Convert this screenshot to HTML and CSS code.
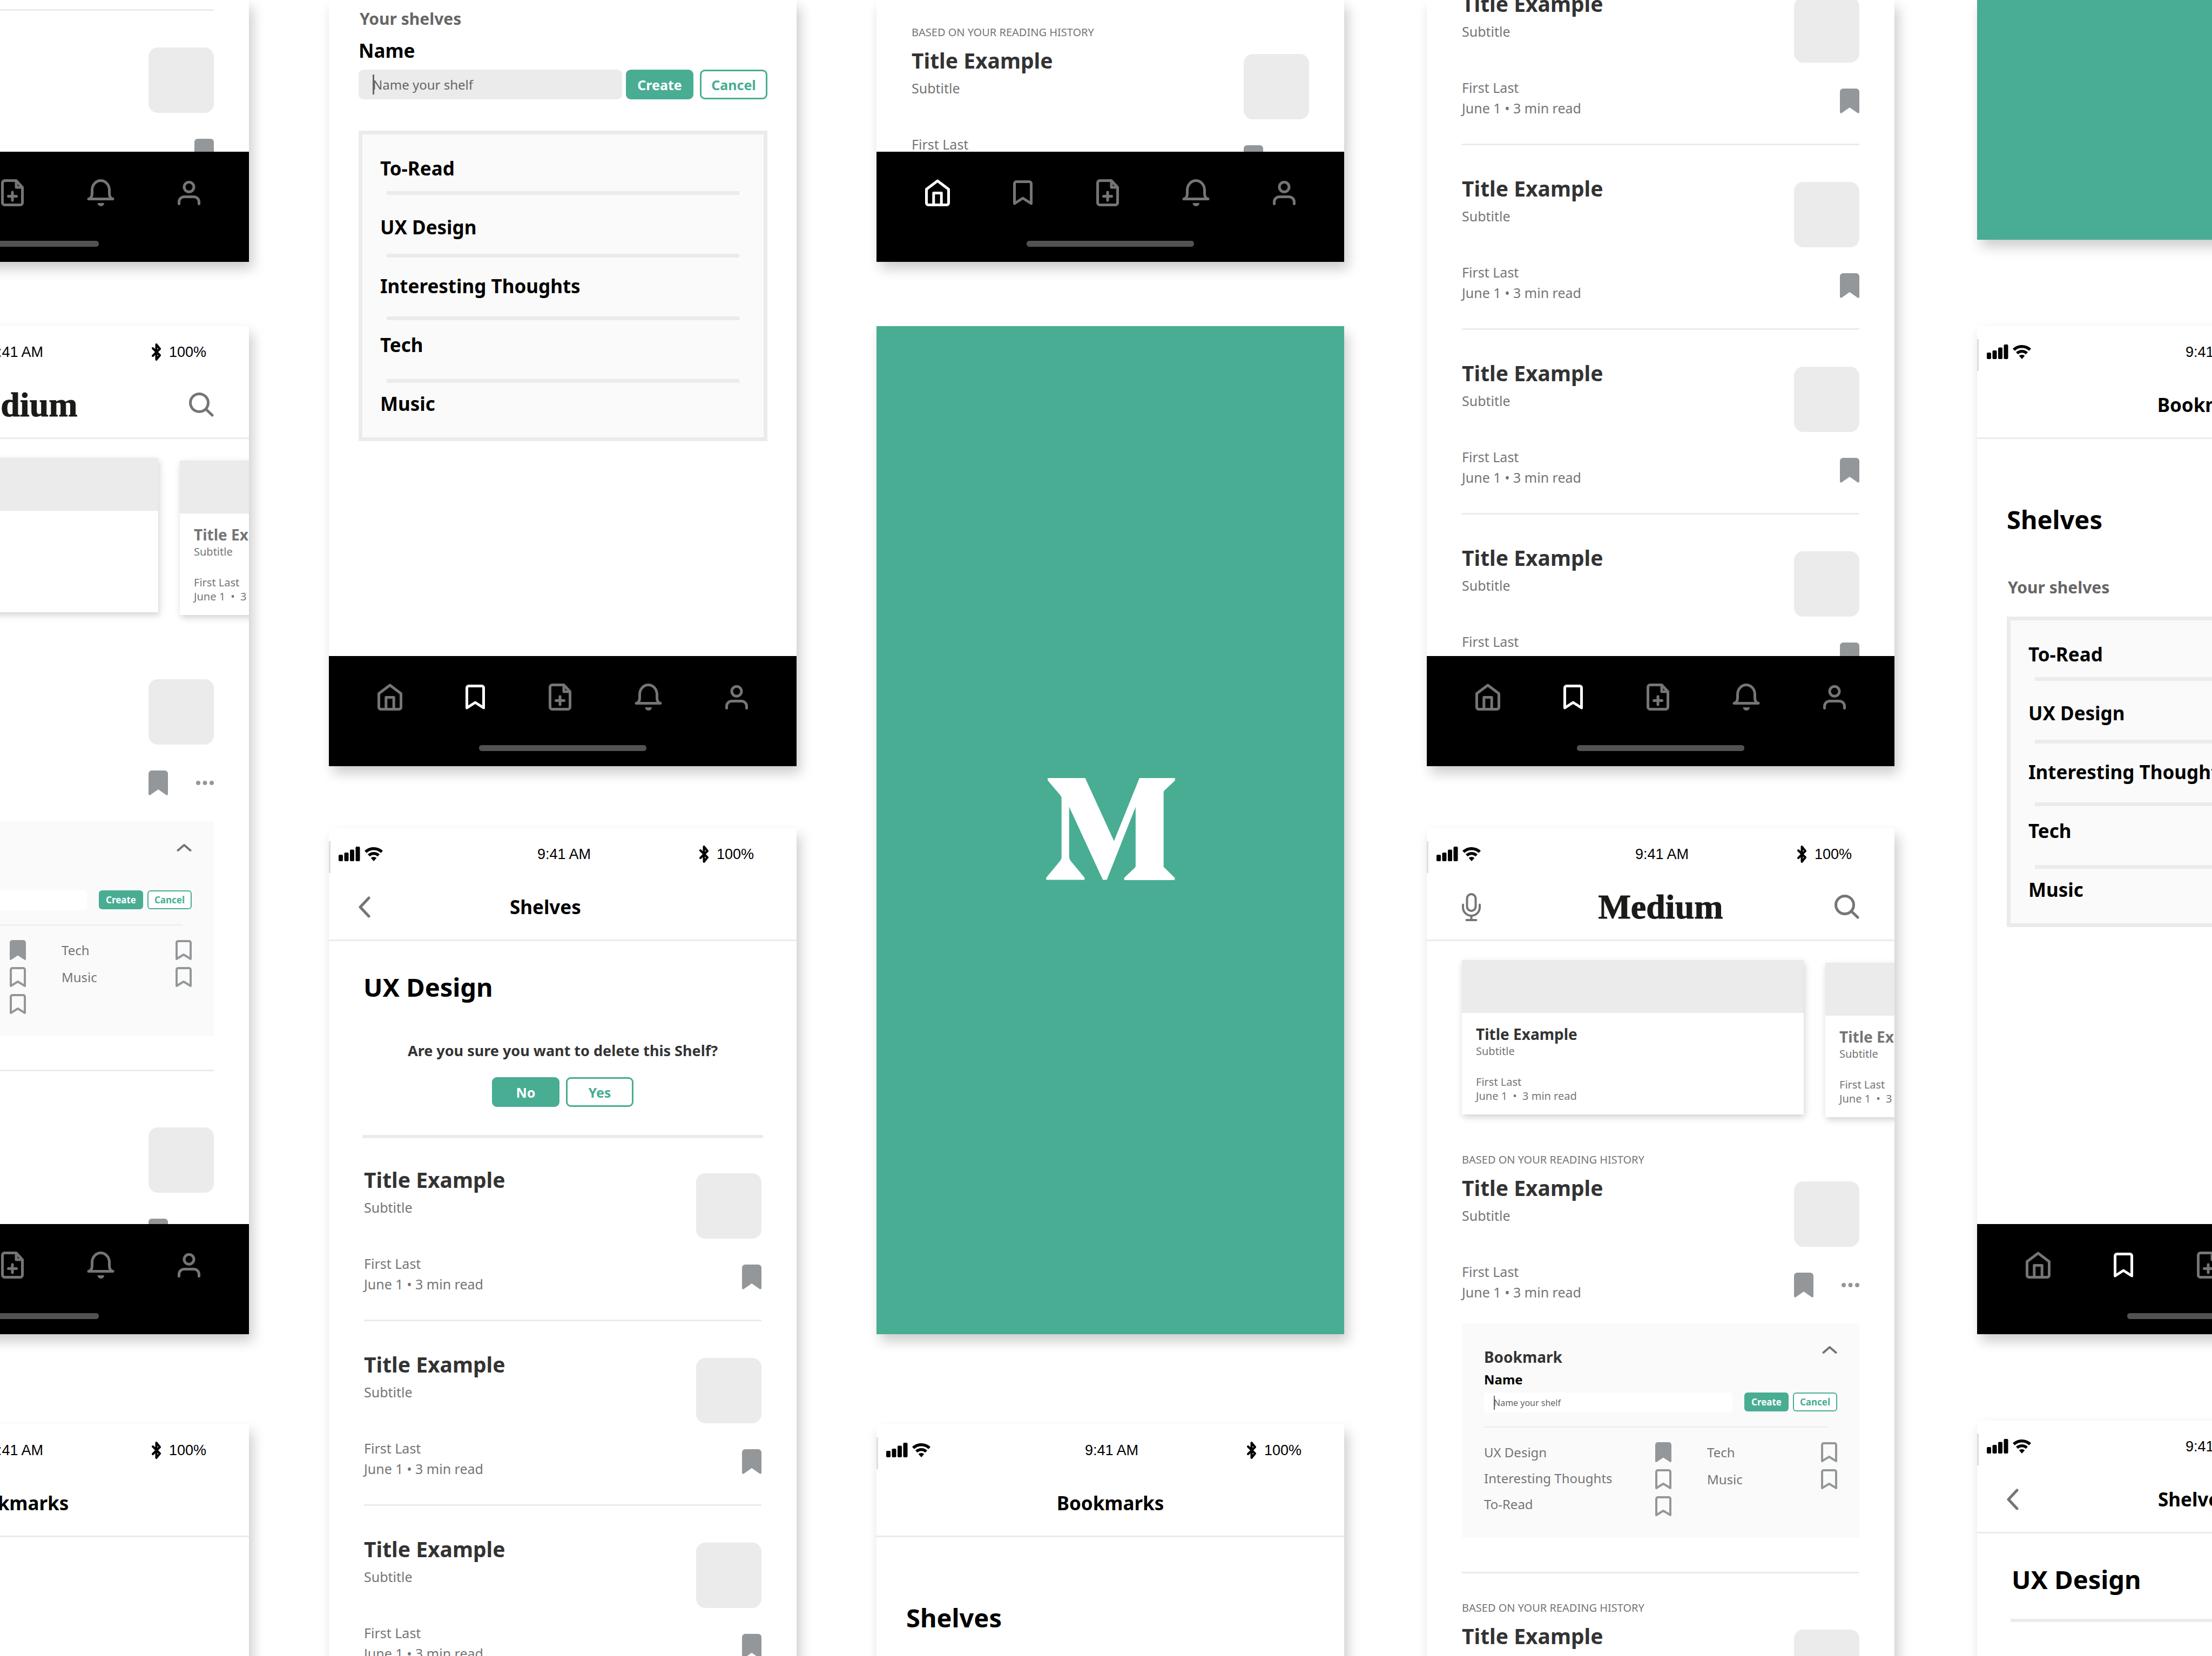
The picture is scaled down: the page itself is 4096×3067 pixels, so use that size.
FILE: index.html
```html
<!DOCTYPE html>
<html lang="en">
<head>
<meta charset="utf-8">
<title>Medium shelves – screens</title>
<link rel="stylesheet" href="styles.css">
</head>
<body>
<svg class="sprite" aria-hidden="true">
  <symbol id="i-home" viewBox="0 0 46 50"><path class="line" d="M2.5 18.5 23 3l20.500 15.500V44a3.500 3.500 0 0 1-3.500 3.500H6A3.500 3.500 0 0 1 2.500 44ZM15.800 47V25.500h14.400V47"/></symbol>
  <symbol id="i-mark" viewBox="0 0 36 46"><path class="line" d="M2.500 6A3.500 3.500 0 0 1 6 2.500h24A3.500 3.500 0 0 1 33.500 6v37L18 33 2.500 43Z"/></symbol>
  <symbol id="i-file" viewBox="0 0 42 50"><path class="line" d="M28 2.500H6.500a4 4 0 0 0-4 4v37a4 4 0 0 0 4 4h29a4 4 0 0 0 4-4V15ZM28 2.500V15h11.500M21 24v15M13.500 31.500h15"/></symbol>
  <symbol id="i-bell" viewBox="0 0 51 50"><path class="line" d="M9.500 26v-6a16 17.500 0 0 1 32 0v6c0 6 1.500 9.500 6.500 10.500H3C8 35.500 9.500 32 9.500 26Z"/><path d="M19.500 44h12.500c0 3-3 6-6.200 6s-6.300-3-6.300-6z"/></symbol>
  <symbol id="i-user" viewBox="0 0 42 45"><circle class="line" cx="21" cy="11.300" r="9"/><path class="line" d="M2.500 42.500V39a9.500 9.500 0 0 1 9.500-9.500h18a9.500 9.500 0 0 1 9.500 9.500v3.500"/></symbol>
  <symbol id="i-mark-full" viewBox="0 0 36 46"><path d="M0 6a6 6 0 0 1 6-6h24a6 6 0 0 1 6 6v37.500c0 1.700-1.500 2.800-3 2L18 35 3 45.500c-1.500.800-3-.300-3-2Z"/></symbol>
  <symbol id="i-mark-sm" viewBox="0 0 30 37"><path class="line thin" d="M2 5a3 3 0 0 1 3-3h20a3 3 0 0 1 3 3v30l-13-8-13 8Z"/></symbol>
  <symbol id="i-mark-sm-full" viewBox="0 0 30 37"><path d="M0 5a5 5 0 0 1 5-5h20a5 5 0 0 1 5 5v30c0 1.500-1.300 2.300-2.500 1.700L15 28.500 2.500 36.700C1.300 37.300 0 36.500 0 35Z"/></symbol>
  <symbol id="i-dots" viewBox="0 0 33 8"><circle cx="4" cy="4" r="4"/><circle cx="16.500" cy="4" r="4"/><circle cx="29" cy="4" r="4"/></symbol>
  <symbol id="i-mic" viewBox="0 0 35 52"><path class="line thin" d="M9.500 10a8 8 0 0 1 16 0v15a8 8 0 0 1-16 0ZM2 21.500v5a15.500 15.500 0 0 0 31 0v-5M17.500 42v8M8.500 50h18"/></symbol>
  <symbol id="i-search" viewBox="0 0 46 45"><circle class="line" cx="19" cy="19" r="16.500"/><path class="line" d="m31.500 31 11.500 11"/></symbol>
  <symbol id="i-back" viewBox="0 0 22 40"><path class="line" d="M19 3 3 20l16 17"/></symbol>
  <symbol id="i-up" viewBox="0 0 28 16"><path class="line thin" d="M2.500 13 14 3l11.500 10"/></symbol>
  <symbol id="i-signal" viewBox="0 0 40 27"><rect y="15" width="8" height="12" rx="2"/><rect x="10.500" y="11" width="8" height="16" rx="2"/><rect x="21" y="5.500" width="8" height="21.500" rx="2"/><rect x="31.500" width="8" height="27" rx="2"/></symbol>
  <symbol id="i-wifi" viewBox="0 0 34 26"><path d="M17 0C10.500 0 4.500 2.500 0 6.800l3.800 4a19 19 0 0 1 26.400 0l3.800-4A24.500 24.500 0 0 0 17 0Z"/><path d="M17 9c-4.200 0-8 1.600-11 4.300l3.700 3.900a10.700 10.700 0 0 1 14.600 0l3.700-3.900A16 16 0 0 0 17 9Z"/><path d="M17 18c-2.100 0-4 .800-5.300 2L17 26l5.300-6A8 8 0 0 0 17 18Z"/></symbol>
  <symbol id="i-bluetooth" viewBox="0 0 18 34"><path class="line thin" d="m2 10 13 13-6.500 8V3L15 11 2 24"/></symbol>
</svg>

<main class="wall">

  <div class="column">
    <section class="phone phone--strip">
      <div class="screen screen--tail">
        <article class="article article--ruled">
          <div class="article-text">
            <h3 class="article-title">Title Example</h3>
            <p class="article-sub">Subtitle</p>
            <p class="meta">First Last</p>
            <p class="meta">June 1 • 3 min read</p>
          </div>
          <div class="article-side">
            <div class="thumb"></div>
            <button class="icon-btn" aria-label="Bookmark"><svg class="mark"><use href="#i-mark-full"/></svg></button>
          </div>
        </article>
      </div>
      <nav class="nav">
        <div class="nav-row">
          <button class="icon-btn" aria-label="Home"><svg class="n-home"><use href="#i-home"/></svg></button>
          <button class="icon-btn" aria-label="Bookmarks"><svg class="mark"><use href="#i-mark"/></svg></button>
          <button class="icon-btn" aria-label="New story"><svg class="n-file"><use href="#i-file"/></svg></button>
          <button class="icon-btn" aria-label="Notifications"><svg class="n-bell"><use href="#i-bell"/></svg></button>
          <button class="icon-btn" aria-label="Profile"><svg class="n-user"><use href="#i-user"/></svg></button>
        </div>
        <div class="home-bar"></div>
      </nav>
    </section>

    <section class="phone phone--full gap-md">
      <header class="head">
        <div class="status">
          <span class="status-left"><svg class="s-signal"><use href="#i-signal"/></svg><svg class="s-wifi"><use href="#i-wifi"/></svg></span>
          <span>9:41 AM</span>
          <span class="status-right"><svg class="s-bt"><use href="#i-bluetooth"/></svg>100%</span>
        </div>
        <div class="bar">
          <button class="icon-btn" aria-label="Voice"><svg class="h-mic"><use href="#i-mic"/></svg></button>
          <h1 class="brand">Medium</h1>
          <button class="icon-btn bar-end" aria-label="Search"><svg class="h-search"><use href="#i-search"/></svg></button>
        </div>
      </header>
      <div class="screen">
        <div class="carousel">
          <div class="card">
            <div class="card-art"></div>
            <h3 class="card-title">Title Example</h3>
            <p class="card-text">Subtitle</p>
            <p class="card-text card-author">First Last</p>
            <p class="card-text">June 1 <span class="dot">•</span> 3 min read</p>
          </div>
          <div class="card card--next">
            <div class="card-art"></div>
            <h3 class="card-title">Title Example</h3>
            <p class="card-text">Subtitle</p>
            <p class="card-text card-author">First Last</p>
            <p class="card-text">June 1 <span class="dot">•</span> 3 min read</p>
          </div>
        </div>
        <p class="overline">BASED ON YOUR READING HISTORY</p>
        <article class="article article--home">
          <div class="article-text">
            <h3 class="article-title">Title Example</h3>
            <p class="article-sub">Subtitle</p>
            <p class="meta">First Last</p>
            <p class="meta">June 1 • 3 min read</p>
          </div>
          <div class="article-side">
            <div class="thumb"></div>
            <div class="actions">
              <button class="icon-btn" aria-label="Bookmark"><svg class="mark"><use href="#i-mark-full"/></svg></button>
              <button class="icon-btn" aria-label="More"><svg class="dots"><use href="#i-dots"/></svg></button>
            </div>
          </div>
        </article>
        <div class="panel">
          <div class="panel-head">
            <h4 class="panel-title">Bookmark</h4>
            <button class="icon-btn" aria-label="Collapse"><svg class="p-up"><use href="#i-up"/></svg></button>
          </div>
          <label class="panel-label" for="panel-name-1">Name</label>
          <div class="panel-form">
            <input class="field field--sm" id="panel-name-1" type="text" placeholder="Name your shelf">
            <button class="btn btn--sm">Create</button>
            <button class="btn btn--sm btn--ghost">Cancel</button>
          </div>
          <div class="panel-lists">
            <div class="pick">
              <ul class="pick-names"><li>UX Design</li><li>Interesting Thoughts</li><li>To-Read</li></ul>
              <div class="pick-marks">
                <button class="icon-btn" aria-label="UX Design" aria-pressed="true"><svg class="mark-sm"><use href="#i-mark-sm-full"/></svg></button>
                <button class="icon-btn" aria-label="Interesting Thoughts"><svg class="mark-sm"><use href="#i-mark-sm"/></svg></button>
                <button class="icon-btn" aria-label="To-Read"><svg class="mark-sm"><use href="#i-mark-sm"/></svg></button>
              </div>
            </div>
            <div class="pick pick--loose">
              <ul class="pick-names"><li>Tech</li><li>Music</li></ul>
              <div class="pick-marks">
                <button class="icon-btn" aria-label="Tech"><svg class="mark-sm"><use href="#i-mark-sm"/></svg></button>
                <button class="icon-btn" aria-label="Music"><svg class="mark-sm"><use href="#i-mark-sm"/></svg></button>
              </div>
            </div>
          </div>
        </div>
        <hr class="rule">
        <p class="overline">BASED ON YOUR READING HISTORY</p>
        <article class="article article--home">
          <div class="article-text">
            <h3 class="article-title">Title Example</h3>
            <p class="article-sub">Subtitle</p>
            <p class="meta">First Last</p>
          </div>
          <div class="article-side">
            <div class="thumb"></div>
            <div class="actions">
              <button class="icon-btn" aria-label="Bookmark"><svg class="mark"><use href="#i-mark-full"/></svg></button>
              <button class="icon-btn" aria-label="More"><svg class="dots"><use href="#i-dots"/></svg></button>
            </div>
          </div>
        </article>
      </div>
      <nav class="nav">
        <div class="nav-row">
          <button class="icon-btn active" aria-label="Home"><svg class="n-home"><use href="#i-home"/></svg></button>
          <button class="icon-btn" aria-label="Bookmarks"><svg class="mark"><use href="#i-mark"/></svg></button>
          <button class="icon-btn" aria-label="New story"><svg class="n-file"><use href="#i-file"/></svg></button>
          <button class="icon-btn" aria-label="Notifications"><svg class="n-bell"><use href="#i-bell"/></svg></button>
          <button class="icon-btn" aria-label="Profile"><svg class="n-user"><use href="#i-user"/></svg></button>
        </div>
        <div class="home-bar"></div>
      </nav>
    </section>

    <section class="phone phone--full gap-xl">
      <header class="head">
        <div class="status">
          <span class="status-left"><svg class="s-signal"><use href="#i-signal"/></svg><svg class="s-wifi"><use href="#i-wifi"/></svg></span>
          <span>9:41 AM</span>
          <span class="status-right"><svg class="s-bt"><use href="#i-bluetooth"/></svg>100%</span>
        </div>
        <div class="bar bar--page"><span></span><h1 class="bar-title">Bookmarks</h1></div>
      </header>
      <div class="screen shelves"><h2 class="page-title">Shelves</h2></div>
    </section>
  </div>

  <div class="column">
    <section class="phone phone--cut">
      <div class="screen shelves shelves--tail">
        <p class="section-label">Your shelves</p>
        <label class="form-label" for="shelf-name">Name</label>
        <div class="form">
          <input class="field" id="shelf-name" type="text" placeholder="Name your shelf">
          <button class="btn">Create</button>
          <button class="btn btn--ghost">Cancel</button>
        </div>
        <ul class="shelf-box"><li>To-Read</li><li>UX Design</li><li>Interesting Thoughts</li><li>Tech</li><li>Music</li></ul>
      </div>
      <nav class="nav">
        <div class="nav-row">
          <button class="icon-btn" aria-label="Home"><svg class="n-home"><use href="#i-home"/></svg></button>
          <button class="icon-btn active" aria-label="Bookmarks"><svg class="mark"><use href="#i-mark"/></svg></button>
          <button class="icon-btn" aria-label="New story"><svg class="n-file"><use href="#i-file"/></svg></button>
          <button class="icon-btn" aria-label="Notifications"><svg class="n-bell"><use href="#i-bell"/></svg></button>
          <button class="icon-btn" aria-label="Profile"><svg class="n-user"><use href="#i-user"/></svg></button>
        </div>
        <div class="home-bar"></div>
      </nav>
    </section>

    <section class="phone phone--full gap-sm">
      <header class="head">
        <div class="status">
          <span class="status-left"><svg class="s-signal"><use href="#i-signal"/></svg><svg class="s-wifi"><use href="#i-wifi"/></svg></span>
          <span>9:41 AM</span>
          <span class="status-right"><svg class="s-bt"><use href="#i-bluetooth"/></svg>100%</span>
        </div>
        <div class="bar bar--page">
          <button class="icon-btn" aria-label="Back"><svg class="h-back"><use href="#i-back"/></svg></button>
          <h1 class="bar-title">Shelves</h1>
        </div>
      </header>
      <div class="screen shelf">
        <h2 class="page-title">UX Design</h2>
        <p class="question">Are you sure you want to delete this Shelf?</p>
        <div class="choices">
          <button class="btn">No</button>
          <button class="btn btn--ghost">Yes</button>
        </div>
        <hr class="thick-rule">
        <article class="article article--first">
          <div class="article-text">
            <h3 class="article-title">Title Example</h3>
            <p class="article-sub">Subtitle</p>
            <p class="meta">First Last</p>
            <p class="meta">June 1 • 3 min read</p>
          </div>
          <div class="article-side">
            <div class="thumb"></div>
            <button class="icon-btn" aria-label="Bookmark"><svg class="mark"><use href="#i-mark-full"/></svg></button>
          </div>
        </article>
        <article class="article article--ruled">
          <div class="article-text">
            <h3 class="article-title">Title Example</h3>
            <p class="article-sub">Subtitle</p>
            <p class="meta">First Last</p>
            <p class="meta">June 1 • 3 min read</p>
          </div>
          <div class="article-side">
            <div class="thumb"></div>
            <button class="icon-btn" aria-label="Bookmark"><svg class="mark"><use href="#i-mark-full"/></svg></button>
          </div>
        </article>
        <article class="article article--ruled">
          <div class="article-text">
            <h3 class="article-title">Title Example</h3>
            <p class="article-sub">Subtitle</p>
            <p class="meta">First Last</p>
            <p class="meta">June 1 • 3 min read</p>
          </div>
          <div class="article-side">
            <div class="thumb"></div>
            <button class="icon-btn" aria-label="Bookmark"><svg class="mark"><use href="#i-mark-full"/></svg></button>
          </div>
        </article>
      </div>
    </section>
  </div>

  <div class="column">
    <section class="phone phone--strip">
      <div class="screen screen--tail-home">
        <p class="overline">BASED ON YOUR READING HISTORY</p>
        <article class="article article--home">
          <div class="article-text">
            <h3 class="article-title">Title Example</h3>
            <p class="article-sub">Subtitle</p>
            <p class="meta">First Last</p>
            <p class="meta">June 1 • 3 min read</p>
          </div>
          <div class="article-side">
            <div class="thumb"></div>
            <div class="actions">
              <button class="icon-btn" aria-label="Bookmark"><svg class="mark"><use href="#i-mark-full"/></svg></button>
              <button class="icon-btn" aria-label="More"><svg class="dots"><use href="#i-dots"/></svg></button>
            </div>
          </div>
        </article>
      </div>
      <nav class="nav">
        <div class="nav-row">
          <button class="icon-btn active" aria-label="Home"><svg class="n-home"><use href="#i-home"/></svg></button>
          <button class="icon-btn" aria-label="Bookmarks"><svg class="mark"><use href="#i-mark"/></svg></button>
          <button class="icon-btn" aria-label="New story"><svg class="n-file"><use href="#i-file"/></svg></button>
          <button class="icon-btn" aria-label="Notifications"><svg class="n-bell"><use href="#i-bell"/></svg></button>
          <button class="icon-btn" aria-label="Profile"><svg class="n-user"><use href="#i-user"/></svg></button>
        </div>
        <div class="home-bar"></div>
      </nav>
    </section>

    <section class="phone phone--full phone--splash gap-md">
      <svg class="logo" viewBox="120 128 1050 832" role="img" aria-label="Medium logo"><path d="M132 128H438L673 642 880 128H1170V148L1083 230Q1077 236 1077 244V845Q1077 853 1083 858L1168 941V960H756V941L843 859Q849 853 849 846V363L614 958H582L307 362V770Q307 787 318 801L433 940V958H120V940L235 801Q245 788 245 775V292Q245 279 235 268L132 147Z"/></svg>
    </section>

    <section class="phone phone--full gap-xl">
      <header class="head">
        <div class="status">
          <span class="status-left"><svg class="s-signal"><use href="#i-signal"/></svg><svg class="s-wifi"><use href="#i-wifi"/></svg></span>
          <span>9:41 AM</span>
          <span class="status-right"><svg class="s-bt"><use href="#i-bluetooth"/></svg>100%</span>
        </div>
        <div class="bar bar--page"><span></span><h1 class="bar-title">Bookmarks</h1></div>
      </header>
      <div class="screen shelves"><h2 class="page-title">Shelves</h2></div>
    </section>
  </div>

  <div class="column">
    <section class="phone phone--cut">
      <div class="screen screen--scrolled">
        <article class="article">
          <div class="article-text">
            <h3 class="article-title">Title Example</h3>
            <p class="article-sub">Subtitle</p>
            <p class="meta">First Last</p>
            <p class="meta">June 1 • 3 min read</p>
          </div>
          <div class="article-side">
            <div class="thumb"></div>
            <button class="icon-btn" aria-label="Bookmark"><svg class="mark"><use href="#i-mark-full"/></svg></button>
          </div>
        </article>
        <article class="article article--ruled">
          <div class="article-text">
            <h3 class="article-title">Title Example</h3>
            <p class="article-sub">Subtitle</p>
            <p class="meta">First Last</p>
            <p class="meta">June 1 • 3 min read</p>
          </div>
          <div class="article-side">
            <div class="thumb"></div>
            <button class="icon-btn" aria-label="Bookmark"><svg class="mark"><use href="#i-mark-full"/></svg></button>
          </div>
        </article>
        <article class="article article--ruled">
          <div class="article-text">
            <h3 class="article-title">Title Example</h3>
            <p class="article-sub">Subtitle</p>
            <p class="meta">First Last</p>
            <p class="meta">June 1 • 3 min read</p>
          </div>
          <div class="article-side">
            <div class="thumb"></div>
            <button class="icon-btn" aria-label="Bookmark"><svg class="mark"><use href="#i-mark-full"/></svg></button>
          </div>
        </article>
        <article class="article article--ruled">
          <div class="article-text">
            <h3 class="article-title">Title Example</h3>
            <p class="article-sub">Subtitle</p>
            <p class="meta">First Last</p>
            <p class="meta">June 1 • 3 min read</p>
          </div>
          <div class="article-side">
            <div class="thumb"></div>
            <button class="icon-btn" aria-label="Bookmark"><svg class="mark"><use href="#i-mark-full"/></svg></button>
          </div>
        </article>
      </div>
      <nav class="nav">
        <div class="nav-row">
          <button class="icon-btn" aria-label="Home"><svg class="n-home"><use href="#i-home"/></svg></button>
          <button class="icon-btn active" aria-label="Bookmarks"><svg class="mark"><use href="#i-mark"/></svg></button>
          <button class="icon-btn" aria-label="New story"><svg class="n-file"><use href="#i-file"/></svg></button>
          <button class="icon-btn" aria-label="Notifications"><svg class="n-bell"><use href="#i-bell"/></svg></button>
          <button class="icon-btn" aria-label="Profile"><svg class="n-user"><use href="#i-user"/></svg></button>
        </div>
        <div class="home-bar"></div>
      </nav>
    </section>

    <section class="phone phone--full gap-sm">
      <header class="head">
        <div class="status">
          <span class="status-left"><svg class="s-signal"><use href="#i-signal"/></svg><svg class="s-wifi"><use href="#i-wifi"/></svg></span>
          <span>9:41 AM</span>
          <span class="status-right"><svg class="s-bt"><use href="#i-bluetooth"/></svg>100%</span>
        </div>
        <div class="bar">
          <button class="icon-btn" aria-label="Voice"><svg class="h-mic"><use href="#i-mic"/></svg></button>
          <h1 class="brand">Medium</h1>
          <button class="icon-btn bar-end" aria-label="Search"><svg class="h-search"><use href="#i-search"/></svg></button>
        </div>
      </header>
      <div class="screen">
        <div class="carousel">
          <div class="card">
            <div class="card-art"></div>
            <h3 class="card-title">Title Example</h3>
            <p class="card-text">Subtitle</p>
            <p class="card-text card-author">First Last</p>
            <p class="card-text">June 1 <span class="dot">•</span> 3 min read</p>
          </div>
          <div class="card card--next">
            <div class="card-art"></div>
            <h3 class="card-title">Title Example</h3>
            <p class="card-text">Subtitle</p>
            <p class="card-text card-author">First Last</p>
            <p class="card-text">June 1 <span class="dot">•</span> 3 min read</p>
          </div>
        </div>
        <p class="overline">BASED ON YOUR READING HISTORY</p>
        <article class="article article--home">
          <div class="article-text">
            <h3 class="article-title">Title Example</h3>
            <p class="article-sub">Subtitle</p>
            <p class="meta">First Last</p>
            <p class="meta">June 1 • 3 min read</p>
          </div>
          <div class="article-side">
            <div class="thumb"></div>
            <div class="actions">
              <button class="icon-btn" aria-label="Bookmark"><svg class="mark"><use href="#i-mark-full"/></svg></button>
              <button class="icon-btn" aria-label="More"><svg class="dots"><use href="#i-dots"/></svg></button>
            </div>
          </div>
        </article>
        <div class="panel">
          <div class="panel-head">
            <h4 class="panel-title">Bookmark</h4>
            <button class="icon-btn" aria-label="Collapse"><svg class="p-up"><use href="#i-up"/></svg></button>
          </div>
          <label class="panel-label" for="panel-name-2">Name</label>
          <div class="panel-form">
            <input class="field field--sm" id="panel-name-2" type="text" placeholder="Name your shelf">
            <button class="btn btn--sm">Create</button>
            <button class="btn btn--sm btn--ghost">Cancel</button>
          </div>
          <div class="panel-lists">
            <div class="pick">
              <ul class="pick-names"><li>UX Design</li><li>Interesting Thoughts</li><li>To-Read</li></ul>
              <div class="pick-marks">
                <button class="icon-btn" aria-label="UX Design" aria-pressed="true"><svg class="mark-sm"><use href="#i-mark-sm-full"/></svg></button>
                <button class="icon-btn" aria-label="Interesting Thoughts"><svg class="mark-sm"><use href="#i-mark-sm"/></svg></button>
                <button class="icon-btn" aria-label="To-Read"><svg class="mark-sm"><use href="#i-mark-sm"/></svg></button>
              </div>
            </div>
            <div class="pick pick--loose">
              <ul class="pick-names"><li>Tech</li><li>Music</li></ul>
              <div class="pick-marks">
                <button class="icon-btn" aria-label="Tech"><svg class="mark-sm"><use href="#i-mark-sm"/></svg></button>
                <button class="icon-btn" aria-label="Music"><svg class="mark-sm"><use href="#i-mark-sm"/></svg></button>
              </div>
            </div>
          </div>
        </div>
        <hr class="rule">
        <p class="overline">BASED ON YOUR READING HISTORY</p>
        <article class="article article--home">
          <div class="article-text">
            <h3 class="article-title">Title Example</h3>
            <p class="article-sub">Subtitle</p>
          </div>
          <div class="article-side"><div class="thumb"></div></div>
        </article>
      </div>
    </section>
  </div>

  <div class="column">
    <section class="phone phone--splash phone--stub"></section>

    <section class="phone phone--full gap-lg">
      <header class="head">
        <div class="status">
          <span class="status-left"><svg class="s-signal"><use href="#i-signal"/></svg><svg class="s-wifi"><use href="#i-wifi"/></svg></span>
          <span>9:41 AM</span>
          <span class="status-right"><svg class="s-bt"><use href="#i-bluetooth"/></svg>100%</span>
        </div>
        <div class="bar bar--page"><span></span><h1 class="bar-title">Bookmarks</h1></div>
      </header>
      <div class="screen shelves">
        <h2 class="page-title">Shelves</h2>
        <p class="section-label">Your shelves</p>
        <ul class="shelf-box"><li>To-Read</li><li>UX Design</li><li>Interesting Thoughts</li><li>Tech</li><li>Music</li></ul>
      </div>
      <nav class="nav">
        <div class="nav-row">
          <button class="icon-btn" aria-label="Home"><svg class="n-home"><use href="#i-home"/></svg></button>
          <button class="icon-btn active" aria-label="Bookmarks"><svg class="mark"><use href="#i-mark"/></svg></button>
          <button class="icon-btn" aria-label="New story"><svg class="n-file"><use href="#i-file"/></svg></button>
          <button class="icon-btn" aria-label="Notifications"><svg class="n-bell"><use href="#i-bell"/></svg></button>
          <button class="icon-btn" aria-label="Profile"><svg class="n-user"><use href="#i-user"/></svg></button>
        </div>
        <div class="home-bar"></div>
      </nav>
    </section>

    <section class="phone phone--full gap-lg">
      <header class="head">
        <div class="status">
          <span class="status-left"><svg class="s-signal"><use href="#i-signal"/></svg><svg class="s-wifi"><use href="#i-wifi"/></svg></span>
          <span>9:41 AM</span>
          <span class="status-right"><svg class="s-bt"><use href="#i-bluetooth"/></svg>100%</span>
        </div>
        <div class="bar bar--page">
          <button class="icon-btn" aria-label="Back"><svg class="h-back"><use href="#i-back"/></svg></button>
          <h1 class="bar-title">Shelves</h1>
        </div>
      </header>
      <div class="screen shelf">
        <h2 class="page-title">UX Design</h2>
        <hr class="thick-rule thick-rule--near">
      </div>
    </section>
  </div>

</main>
</body>
</html>
```
FILE: styles.css
```css
:root {
  --green: #48ad93;
  --line: #ebebeb;
  --panel: #fafafa;
  --grey: #757575;
  --icon: #939799;
  --ink: #333;
}

* { box-sizing: border-box; }

html, body { overflow: hidden; }

body {
  margin: 0;
  background: #fff;
  color: #000;
  font-family: "Noto Sans", "Open Sans", sans-serif;
}

h1, h2, h3, h4, p, ul { margin: 0; padding: 0; }
ul { list-style: none; }
svg { display: block; fill: currentColor; }

.sprite { display: none; }

.line {
  fill: none;
  stroke: currentColor;
  stroke-width: 5;
  stroke-linecap: round;
  stroke-linejoin: round;
}
.thin { stroke-width: 4; }

/* Wall of screens; the outer columns bleed off both edges */
.wall {
  --col: minmax(0, 1fr);
  display: grid;
  grid-template-columns: var(--col) 148px var(--col) 148px var(--col) 153px var(--col) 153px var(--col);
  width: calc(100% + 836px);
  height: 100vh;
  margin-left: -405px;
  align-items: start;
}
.column:nth-child(1) { grid-column: 1; }
.column:nth-child(2) { grid-column: 3; }
.column:nth-child(3) { grid-column: 5; }
.column:nth-child(4) { grid-column: 7; }
.column:nth-child(5) { grid-column: 9; }

.phone {
  display: flex;
  flex-direction: column;
  background: #fff;
  box-shadow: 7px 13px 22px rgba(0, 0, 0, .2);
}
.phone--full { height: 1867px; }
.phone--strip { height: 485px; }
.phone--cut { height: 1419px; }
.phone--stub { height: 444px; }
.phone--splash {
  align-items: center;
  justify-content: center;
  padding-bottom: 4px;
  background: var(--green);
}
.gap-sm { margin-top: 115px; }
.gap-md { margin-top: 119px; }
.gap-lg { margin-top: 160px; }
.gap-xl { margin-top: 167px; }

.logo { width: 239px; height: 189px; fill: #fff; }

/* Header */
.head { flex: none; border-bottom: 3px solid var(--line); }
.status {
  display: grid;
  grid-template-columns: 1fr auto 1fr;
  align-items: center;
  height: 59px;
  margin-top: 24px;
  padding: 0 79px 12px 15px;
  border-left: 3px solid #dedede;
  font: 27px/32px "Liberation Sans", Arial, sans-serif;
}
.status > :nth-child(2) { padding-left: 66px; }
.status-left, .status-right { display: flex; align-items: center; }
.status-left { gap: 8px; }
.status-right { gap: 14px; justify-content: flex-end; }
.s-signal { width: 40px; height: 27px; }
.s-wifi { width: 34px; height: 26px; }
.s-bt { width: 18px; height: 34px; }

.bar {
  display: grid;
  grid-template-columns: 1fr auto 1fr;
  align-items: center;
  height: 123px;
  padding: 2px 65px 0;
  color: var(--grey);
}
.bar--page { padding: 3px 55px 0; }
.bar-title {
  min-width: 196px;
  color: #000;
  font-size: 35px;
  line-height: 48px;
}
.brand {
  color: #1a1a18;
  font: bold 64px/72px "Liberation Serif", "Times New Roman", serif;
  -webkit-text-stroke: 1px #1a1a18;
}
.h-mic { width: 35px; height: 52px; }
.h-search { width: 46px; height: 45px; }
.h-back { width: 22px; height: 40px; }

.icon-btn {
  display: block;
  justify-self: start;
  padding: 0;
  border: 0;
  background: none;
  color: inherit;
}
.bar .bar-end { justify-self: end; }

.screen { flex: 1; min-height: 0; overflow: hidden; }
.screen--tail { padding-top: 17px; }
.screen--tail-home .overline { margin-top: -4px; }
.screen--scrolled .article:first-child { margin-top: -73px; }

/* Articles */
.article {
  display: flex;
  justify-content: space-between;
  height: 339px;
  margin: 0 65px;
  padding-top: 51px;
}
.article--ruled { height: 342px; border-top: 3px solid var(--line); }
.article--first { padding-top: 48px; height: 336px; }
.article--home { height: 241px; padding-top: 0; }
.article-title { color: var(--ink); font-size: 39px; line-height: 58px; }
.article-sub {
  margin-bottom: 63px;
  color: var(--grey);
  font-size: 25px;
  line-height: 44px;
}
.meta { color: var(--grey); font-size: 25px; line-height: 38px; }
.article-side {
  display: flex;
  flex-direction: column;
  align-items: flex-end;
  gap: 48px;
  padding-top: 17px;
  color: var(--icon);
}
.thumb {
  width: 121px;
  height: 121px;
  border-radius: 17px;
  background: var(--line);
}
.mark { width: 36px; height: 46px; }
.actions {
  display: flex;
  align-items: center;
  justify-content: space-between;
  width: 121px;
}
.dots { width: 33px; height: 8px; }
.overline {
  margin: 0 65px;
  padding-top: 41px;
  color: var(--grey);
  font-size: 20px;
  line-height: 46px;
}
.rule { height: 3px; margin: 63px 65px 0; border: 0; background: var(--line); }

/* Carousel */
.carousel {
  display: flex;
  gap: 40px;
  padding: 35px 0 15px 65px;
}
.card {
  flex: none;
  width: 633px;
  height: 286px;
  background: #fff;
  box-shadow: 2px 5px 12px rgba(0, 0, 0, .18);
}
.card--next { margin-top: 5px; }
.card-art { height: 98px; margin-bottom: 20px; background: var(--line); }
.card-title {
  padding: 0 26px;
  color: var(--ink);
  font-size: 28px;
  line-height: 38px;
}
.card--next .card-title { color: var(--grey); }
.card-text {
  padding: 0 26px;
  color: var(--grey);
  font-size: 20px;
  line-height: 26px;
}
.card-author { margin-top: 31px; }
.dot { margin: 0 5px; }

/* Bookmark panel */
.panel {
  margin: 39px 65px 0;
  padding: 41px 41px 40px;
  background: var(--panel);
}
.panel-head {
  display: flex;
  justify-content: space-between;
  align-items: flex-start;
  color: var(--grey);
}
.panel-title { color: var(--ink); font-size: 28px; line-height: 42px; }
.p-up { width: 28px; height: 16px; }
.panel-label {
  display: block;
  margin-bottom: 3px;
  font-size: 24px;
  font-weight: bold;
  line-height: 42px;
}
.panel-form { display: flex; }
.panel-form .field { margin-right: 22px; }
.panel-form .btn + .btn { margin-left: 8px; }
.panel-lists {
  display: grid;
  grid-template-columns: 347fr 241fr;
  column-gap: 66px;
  padding-top: 26px;
  color: var(--icon);
}
.panel-lists::before {
  content: "";
  grid-column: 1 / -1;
  height: 2px;
  margin: 0 17px 27px 0;
  background: var(--line);
}
.pick { display: flex; justify-content: space-between; align-items: flex-start; }
.pick-names {
  display: grid;
  gap: 11px;
  color: var(--grey);
  font-size: 24px;
  line-height: 37px;
}
.pick--loose .pick-names { gap: 13px; }
.pick-marks { display: grid; gap: 13px; }
.mark-sm { width: 30px; height: 37px; }

/* Forms */
.field {
  flex: 1;
  min-width: 0;
  height: 55px;
  padding: 0 0 0 26px;
  border: 0;
  border-radius: 9px;
  background: linear-gradient(#666, #666) 26px center / 3px 37px no-repeat var(--line);
  font: 24px/32px "Noto Sans", sans-serif;
}
.field::placeholder { color: #666; opacity: 1; }
.field--sm {
  height: 37px;
  padding-left: 18px;
  border-radius: 7px;
  background: linear-gradient(#666, #666) 18px center / 2px 26px no-repeat #fff;
  font-size: 16px;
  line-height: 24px;
}
.btn {
  width: 125px;
  height: 55px;
  padding: 0;
  border: 3px solid var(--green);
  border-radius: 9px;
  background: var(--green);
  color: #fff;
  font: bold 25px/32px "Noto Sans", sans-serif;
}
.btn--ghost { background: #fff; color: var(--green); }
.btn--sm {
  width: 82px;
  height: 35px;
  border-width: 2px;
  border-radius: 6px;
  font-size: 17px;
  line-height: 24px;
}

/* Shelves overview */
.shelves { padding: 119px 54px 0 55px; }
.shelves--tail { padding-top: 15px; }
.page-title { font-size: 47px; line-height: 60px; }
.section-label {
  padding-left: 2px;
  color: #666;
  font-size: 30px;
  font-weight: bold;
  line-height: 40px;
}
.page-title + .section-label { margin: 76px 0 34px; }
.form-label {
  display: block;
  margin: 17px 0 13px;
  font-size: 35px;
  font-weight: bold;
  line-height: 44px;
}
.form { display: flex; margin-bottom: 58px; }
.form .field { margin-right: 7px; }
.form .btn + .btn { margin-left: 12px; }
.shelf-box {
  padding: 8px 33px;
  border: 7px solid var(--line);
  background: repeating-linear-gradient(transparent 0 109px, var(--line) 109px 116px) 45px -4px / calc(100% - 90px) 568px no-repeat var(--panel);
  font-size: 35px;
  font-weight: bold;
  line-height: 109px;
}

/* Single shelf */
.shelf { padding-top: 55px; }
.shelf .page-title { padding-left: 64px; }
.question {
  margin: 68px 0 29px;
  color: var(--ink);
  font-size: 27px;
  font-weight: bold;
  line-height: 40px;
  text-align: center;
}
.choices { display: flex; justify-content: center; gap: 12px; }
.thick-rule { height: 6px; margin: 52px 62px 0; border: 0; background: var(--line); }
.thick-rule--near { margin-top: 43px; }

/* Bottom navigation */
.nav {
  flex: none;
  height: 204px;
  padding: 51px 90px 0;
  background: #000;
  color: var(--grey);
}
.nav-row {
  display: flex;
  justify-content: space-between;
  align-items: center;
  height: 50px;
}
.active { color: #fff; }
.n-home { width: 46px; height: 50px; }
.n-file { width: 42px; height: 50px; }
.n-bell { width: 51px; height: 50px; }
.n-user { width: 42px; height: 45px; }
.home-bar {
  width: 310px;
  height: 11px;
  margin: 64px auto 0;
  border-radius: 5px;
  background: #525252;
}
```
